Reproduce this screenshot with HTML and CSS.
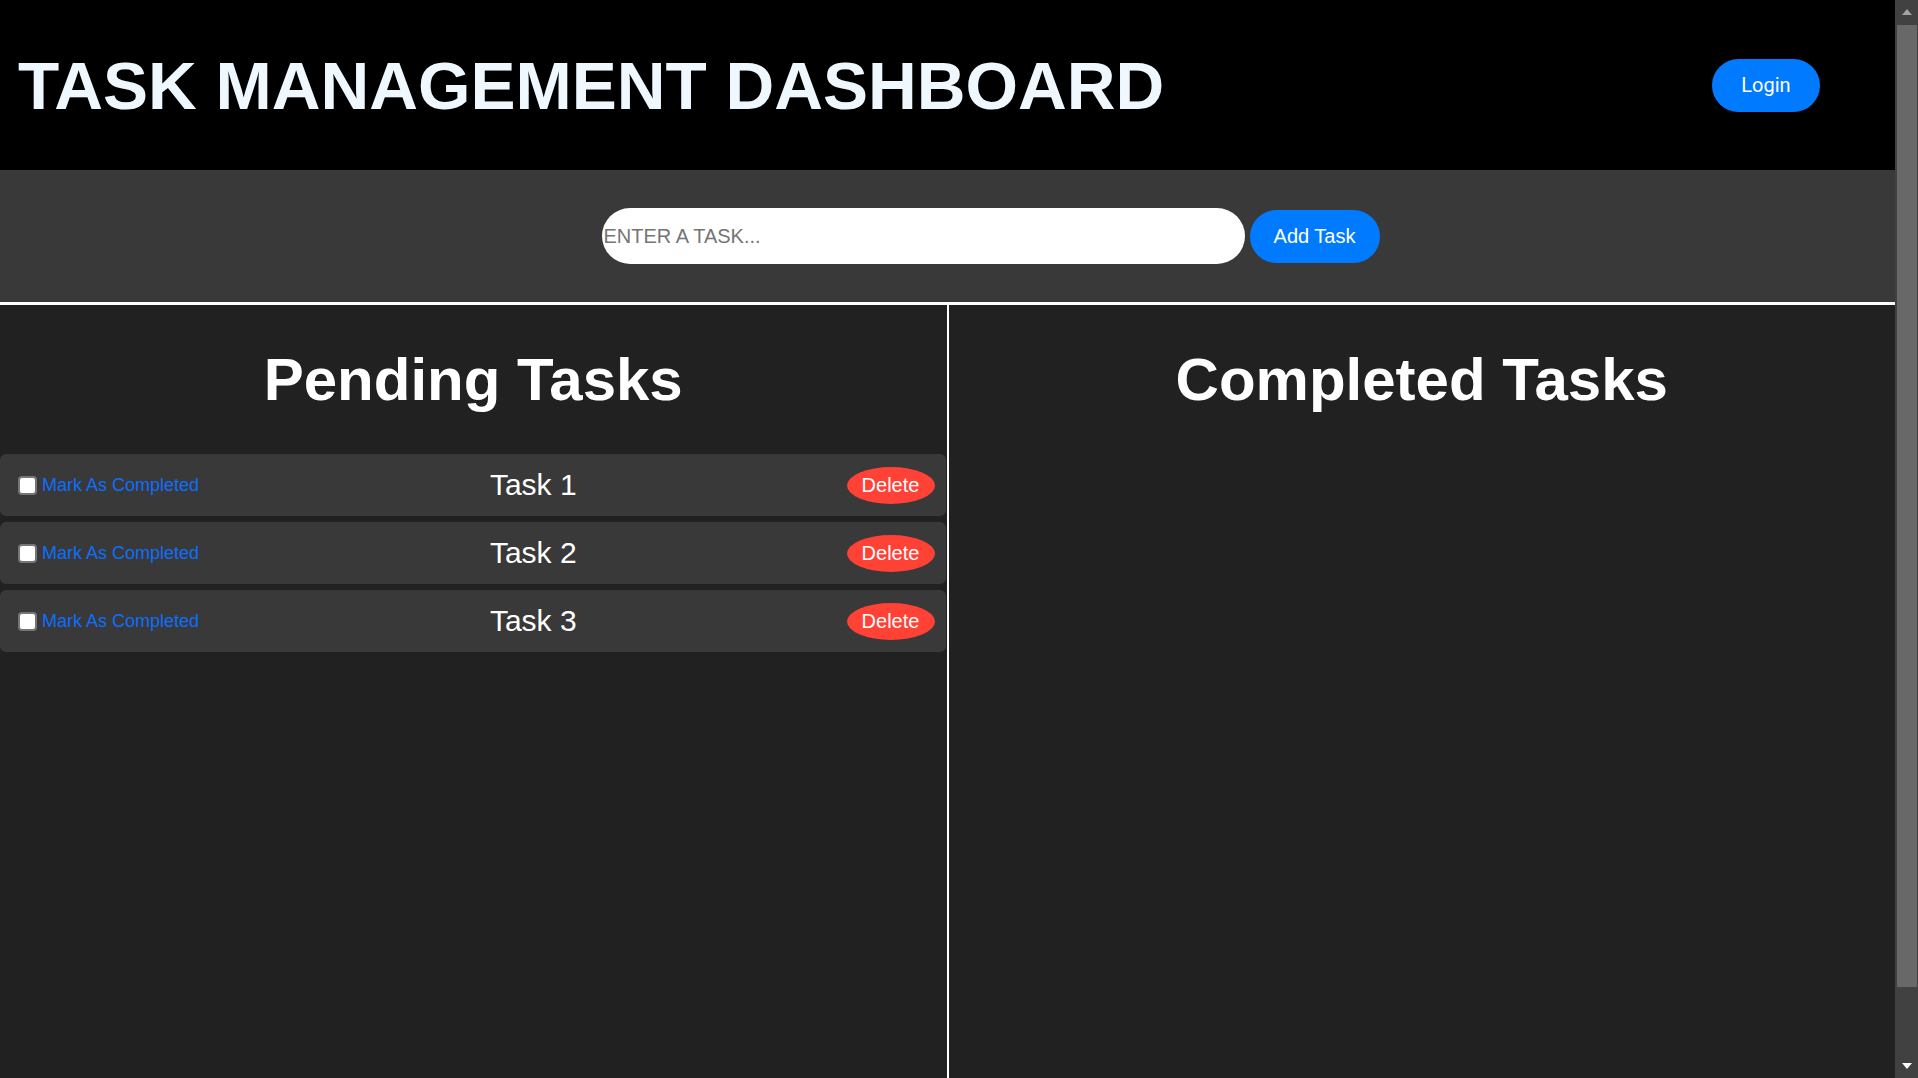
FILE: index.html
```html
<!DOCTYPE html>
<html lang="en">
<head>
<meta charset="utf-8">
<title>Task Management Dashboard</title>
<link rel="stylesheet" href="styles.css">
</head>
<body>
<div class="page">
  <main class="app">
    <header class="topbar">
      <h1 class="title">TASK MANAGEMENT DASHBOARD</h1>
      <button class="login" type="button">Login</button>
    </header>
    <section class="composer">
      <input class="task-input" type="text" placeholder="ENTER A TASK...">
      <button class="add-btn" type="button">Add Task</button>
    </section>
    <section class="boards">
      <div class="board">
        <h2 class="board-title">Pending Tasks</h2>
        <ul class="task-list">
          <li class="task">
            <label class="check-label"><input class="check" type="checkbox">Mark As Completed</label>
            <span class="task-name">Task 1</span>
            <button class="delete" type="button">Delete</button>
          </li>
          <li class="task">
            <label class="check-label"><input class="check" type="checkbox">Mark As Completed</label>
            <span class="task-name">Task 2</span>
            <button class="delete" type="button">Delete</button>
          </li>
          <li class="task">
            <label class="check-label"><input class="check" type="checkbox">Mark As Completed</label>
            <span class="task-name">Task 3</span>
            <button class="delete" type="button">Delete</button>
          </li>
        </ul>
      </div>
      <div class="board">
        <h2 class="board-title">Completed Tasks</h2>
        <ul class="task-list"></ul>
      </div>
    </section>
  </main>
  <div class="scrollbar" aria-hidden="true">
    <div class="sb-arrow"><span class="tri-up"></span></div>
    <div class="sb-thumb"></div>
    <div class="sb-space"></div>
    <div class="sb-arrow"><span class="tri-down"></span></div>
  </div>
</div>
</body>
</html>
```

FILE: styles.css
```css
html, body {
  margin: 0;
  height: 100%;
}

body {
  font-family: "Liberation Sans", Arial, sans-serif;
  background: #212121;
  overflow: hidden;
}

.page {
  display: flex;
  height: 100vh;
}

.app {
  flex: 1;
  min-width: 0;
  display: flex;
  flex-direction: column;
}

/* Header */
.topbar {
  height: 170px;
  flex-shrink: 0;
  box-sizing: border-box;
  background: #000;
  display: flex;
  align-items: center;
  justify-content: space-between;
  padding: 0 75px 0 18px;
}

.title {
  margin: 0;
  font-size: 67.5px;
  line-height: 75px;
  font-weight: bold;
  color: #f0f8ff;
}

.login {
  width: 108px;
  height: 53px;
  border: none;
  border-radius: 27px;
  background: #007bff;
  color: #fff;
  font-family: Roboto, "Liberation Sans", sans-serif;
  font-size: 20px;
  padding: 0;
  cursor: pointer;
}

/* Composer */
.composer {
  height: 132px;
  flex-shrink: 0;
  background: #393939;
  border-bottom: 3px solid #fff;
  display: flex;
  align-items: center;
  justify-content: center;
  gap: 5px;
  padding-left: 86px;
}

.task-input {
  width: 643px;
  height: 56px;
  box-sizing: border-box;
  border: none;
  border-radius: 28px;
  padding: 1px 2px;
  background: #fff;
  font-family: "Liberation Sans", Arial, sans-serif;
  font-size: 20px;
  color: #222;
  outline: none;
}

.task-input::placeholder {
  color: #757575;
}

.add-btn {
  width: 130px;
  height: 53px;
  border: none;
  border-radius: 27px;
  background: #007bff;
  color: #fff;
  font-family: "Liberation Sans", Arial, sans-serif;
  font-size: 20px;
  padding: 0;
  cursor: pointer;
}

/* Boards */
.boards {
  flex: 1;
  display: grid;
  grid-template-columns: 1fr 1fr;
  gap: 2px;
  background: #fff;
}

.board {
  background: #212121;
  padding-top: 41px;
  display: flex;
  flex-direction: column;
}

.board-title {
  margin: 0 0 41px;
  text-align: center;
  font-size: 60px;
  line-height: 67px;
  font-weight: bold;
  color: #fff;
}

.task-list {
  list-style: none;
  margin: 0;
  padding: 0 1px 0 0;
  display: flex;
  flex-direction: column;
  gap: 6px;
}

.task {
  height: 62px;
  box-sizing: border-box;
  background: #393939;
  border-radius: 6px;
  display: flex;
  align-items: center;
  justify-content: space-between;
  padding: 0 11px 0 18px;
}

.check-label {
  display: flex;
  align-items: center;
  gap: 5px;
  color: #0d6efd;
  font-size: 18px;
  padding-right: 21px;
}

.check {
  appearance: none;
  -webkit-appearance: none;
  width: 19px;
  height: 19px;
  margin: 0;
  box-sizing: border-box;
  background: #fff;
  border: 2px solid #767676;
  border-radius: 4px;
}

.task-name {
  color: #fff;
  font-size: 30px;
}

.delete {
  width: 88px;
  height: 37px;
  border: none;
  border-radius: 50%;
  background: #ff4136;
  color: #fff;
  font-family: "Liberation Sans", Arial, sans-serif;
  font-size: 20px;
  padding: 0;
  cursor: pointer;
}

/* Window scrollbar */
.scrollbar {
  width: 23px;
  flex-shrink: 0;
  background: #414141;
  display: flex;
  flex-direction: column;
}

.sb-arrow {
  height: 24px;
  flex-shrink: 0;
  display: flex;
  align-items: center;
  justify-content: center;
}

.tri-up {
  width: 0;
  height: 0;
  border-left: 5px solid transparent;
  border-right: 5px solid transparent;
  border-bottom: 6px solid #a3a3a3;
}

.tri-down {
  width: 0;
  height: 0;
  border-left: 5px solid transparent;
  border-right: 5px solid transparent;
  border-top: 6px solid #ffffff;
}

.sb-thumb {
  height: 962px;
  width: 20px;
  margin: 1px 0 0 2px;
  background: #686868;
  flex-shrink: 0;
}

.sb-space {
  flex: 1;
}
```
